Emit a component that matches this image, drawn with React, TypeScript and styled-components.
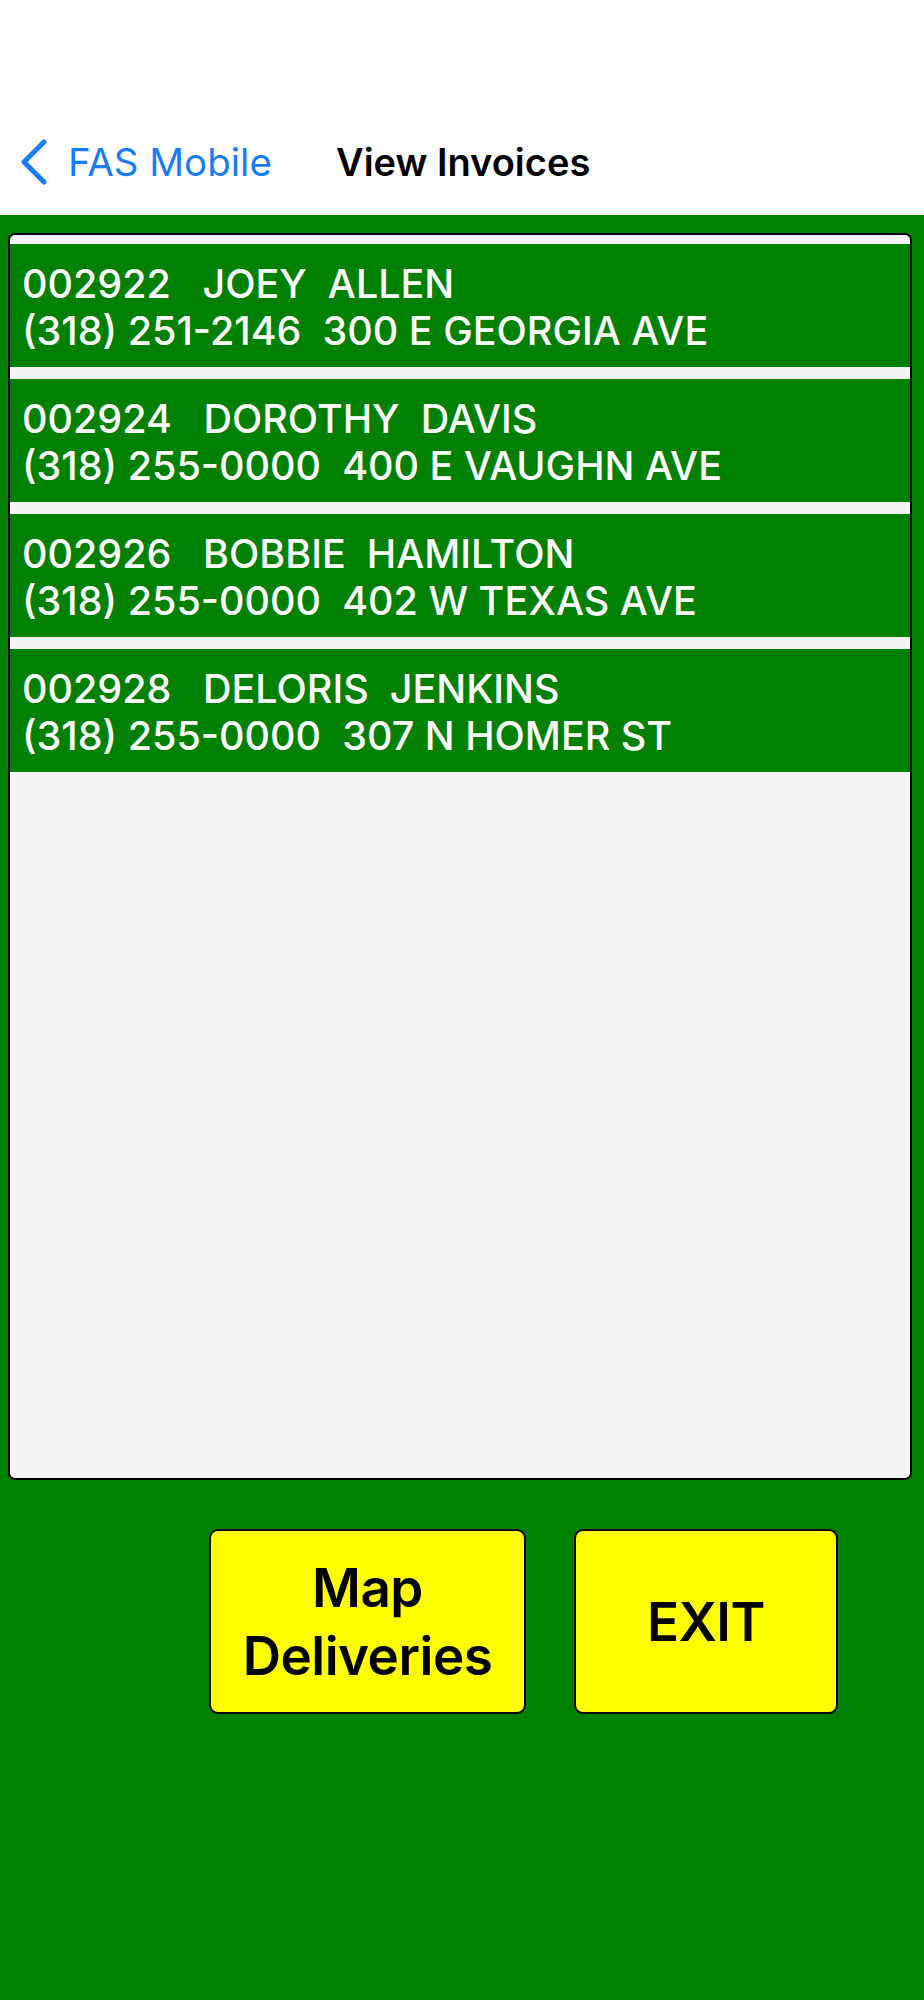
import React from 'react';
import styled, { createGlobalStyle } from "styled-components";

type Invoice = {
    id: string
    first: string
    last: string
    phone: string
    address: string
}

const invoices: Invoice[] = [
    {id: "002922", first: "JOEY", last: "ALLEN", phone: "(318) 251-2146", address: "300 E GEORGIA AVE"},
    {id: "002924", first: "DOROTHY", last: "DAVIS", phone: "(318) 255-0000", address: "400 E VAUGHN AVE"},
    {id: "002926", first: "BOBBIE", last: "HAMILTON", phone: "(318) 255-0000", address: "402 W TEXAS AVE"},
    {id: "002928", first: "DELORIS", last: "JENKINS", phone: "(318) 255-0000", address: "307 N HOMER ST"},
]

const GlobalStyle = createGlobalStyle`
    html, body {
        margin: 0;
        padding: 0;
        background: #008000;
    }
    * {
        box-sizing: border-box;
    }
`

export default function App() {
    return (
        <Screen>
            <GlobalStyle/>
            <NavBar>
                <BackButton>
                    <svg width="28" height="46" viewBox="0 0 28 46">
                        <polyline points="24,3 4,23 24,43" fill="none" stroke="#1A7CF5"
                                  strokeWidth="5" strokeLinecap="round" strokeLinejoin="round"/>
                    </svg>
                    <BackLabel>FAS Mobile</BackLabel>
                </BackButton>
                <Title>View Invoices</Title>
            </NavBar>
            <ListPanel>
                {invoices.map(inv => (
                    <InvoiceRow key={inv.id}>
                        <RowLine>{`${inv.id}   ${inv.first}  ${inv.last}`}</RowLine>
                        <RowLine>{`${inv.phone}  ${inv.address}`}</RowLine>
                    </InvoiceRow>
                ))}
            </ListPanel>
            <ButtonBar>
                <ActionButton width={317}>Map<br/>Deliveries</ActionButton>
                <ActionButton width={264}>EXIT</ActionButton>
            </ButtonBar>
        </Screen>
    );
}

const Screen = styled.div`
    min-height: 2000px;
    background: #008000;
    font-family: Inter, "Liberation Sans", sans-serif;
`

const NavBar = styled.div`
    height: 215px;
    background: #ffffff;
    display: flex;
    align-items: flex-start;
    padding: 139px 0 0 20px;
`

const BackButton = styled.div`
    display: flex;
    align-items: center;
    gap: 20px;
    width: 316px;
`

const BackLabel = styled.span`
    color: #1A7CF5;
    font-size: 38.5px;
    font-weight: 400;
    line-height: 46px;
`

const Title = styled.span`
    color: #000000;
    font-size: 38px;
    font-weight: 600;
    line-height: 46px;
`

const ListPanel = styled.div`
    margin: 18px 12px 0 8px;
    height: 1247px;
    background: #f4f4f4;
    border: 2.5px solid #000000;
    border-radius: 7px;
    padding-top: 9px;
    display: flex;
    flex-direction: column;
    gap: 12px;
    overflow: hidden;
`

const InvoiceRow = styled.div`
    height: 123px;
    background: #008000;
    padding: 5px 0 0 12px;
    display: flex;
    flex-direction: column;
    justify-content: center;
`

const RowLine = styled.div`
    color: #ffffff;
    font-size: 39.5px;
    font-weight: 500;
    line-height: 47px;
    white-space: pre;
`

const ButtonBar = styled.div`
    display: flex;
    gap: 48px;
    padding-left: 209px;
    margin-top: 49px;
`

const ActionButton = styled.div<{ width: number }>`
    width: ${props => props.width}px;
    height: 185px;
    background: #ffff00;
    border: 2px solid #000000;
    border-radius: 9px;
    display: flex;
    align-items: center;
    justify-content: center;
    text-align: center;
    color: #000000;
    font-size: 53px;
    font-weight: 600;
    letter-spacing: -0.5px;
    line-height: 68px;
`
